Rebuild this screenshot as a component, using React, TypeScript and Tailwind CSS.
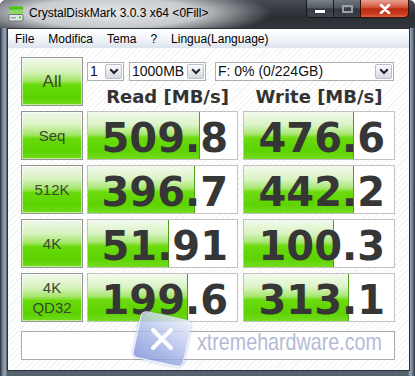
import React from 'react';

const rows = [
  { label: ['Seq'], read: '509.8', rw: 112, write: '476.6', ww: 110 },
  { label: ['512K'], read: '396.7', rw: 107, write: '442.2', ww: 110 },
  { label: ['4K'], read: '51.91', rw: 81, write: '100.3', ww: 90 },
  { label: ['4K', 'QD32'], read: '199.6', rw: 100, write: '313.1', ww: 105 },
];

const menu = ['File', 'Modifica', 'Tema', '?', 'Lingua(Language)'];

function Chevron() {
  return (
    <svg width="10" height="7" viewBox="0 0 10 7">
      <path d="M1.2 1.3 L5 5 L8.8 1.3" fill="none" stroke="#1c2433" strokeWidth="2" />
    </svg>
  );
}

function Select({ text, w }: { text: string; w: string }) {
  return (
    <div className={`${w} flex h-[19px] items-stretch border border-[#a9afb8] bg-white`}>
      <span className="flex-1 pl-[2px] text-[14px] leading-[17px] text-[#111]">{text}</span>
      <div className="m-[1px] flex w-[17px] items-center justify-center rounded-[2px] border border-[#b9bfc8] bg-[linear-gradient(180deg,#fbfbfb,#e6e8eb_55%,#d6d9de)]">
        <Chevron />
      </div>
    </div>
  );
}

function TestButton({ lines, big }: { lines: string[]; big?: boolean }) {
  return (
    <div
      className={`flex h-[49px] w-[62px] shrink-0 flex-col items-center justify-center border border-[#949494] bg-[linear-gradient(180deg,#f1f9ec_0%,#d8f2c0_28%,#a6e66c_48%,#68da0a_57%,#5bd200_84%,#72dc1e_100%)] shadow-[inset_0_0_0_1px_rgba(255,255,255,0.55)] font-['Liberation_Sans',sans-serif] text-[#3b4634] ${
        big ? 'text-[17px]' : 'text-[15px] leading-[20px]'
      }`}
    >
      {lines.map((l) => (
        <span key={l}>{l}</span>
      ))}
    </div>
  );
}

function Result({ value, fill, w }: { value: string; fill: number; w: string }) {
  return (
    <div
      className={`${w} flex h-[49px] items-center justify-end border border-[#c2c2c2] bg-white bg-[linear-gradient(#4f9f1c,#4f9f1c),linear-gradient(180deg,#f3faee_0%,#daf3c4_28%,#a9e672_47%,#6cdb0e_55%,#5dd300_82%,#74dc20_100%)] bg-no-repeat pr-[9px] pt-[4px] font-['DejaVu_Sans',sans-serif] text-[40px] font-bold leading-none text-[#363636]`}
      style={{ backgroundSize: `1px 100%, ${fill}px 100%`, backgroundPosition: `${fill - 1}px 0, 0 0` }}
    >
      {value}
    </div>
  );
}

export default function App() {
  return (
    <div className="relative h-[376px] w-[415px] overflow-hidden rounded-t-[6px] bg-[linear-gradient(90deg,#262b32_0px,#66768a_2px,#9caaba_5px,#56616e_7px,#56616e_408px,#9caaba_410px,#66768a_413px,#262b32_415px)]">
      {/* title bar */}
      <div className="flex h-[28px] items-start bg-[radial-gradient(ellipse_160px_26px_at_112px_13px,rgba(236,238,241,0.97)_0%,rgba(214,217,221,0.9)_55%,rgba(60,64,70,0)_100%),linear-gradient(180deg,#474c53,#2a2d32_60%,#33373d)]">
        <svg className="ml-[8px] mt-[6px]" width="16" height="16" viewBox="0 0 16 16">
          <rect x="1" y="0.5" width="14" height="3" fill="#46c800" />
          <rect x="1" y="4.5" width="14" height="3" fill="#7fe04a" />
          <rect x="1" y="8.5" width="14" height="6.5" rx="1" fill="#e4e7ea" stroke="#6f757c" />
          <rect x="3" y="11" width="5" height="1.5" fill="#9aa0a6" />
          <rect x="11" y="10.5" width="2" height="2" fill="#3ccc00" />
        </svg>
        <span className="ml-[5px] mt-[5px] font-['Liberation_Sans',sans-serif] text-[12px] leading-[16px] text-black">
          CrystalDiskMark 3.0.3 x64 &lt;0Fill&gt;
        </span>
        <div className="ml-auto mr-[6px] flex h-[18px]">
          <div className="flex w-[28px] items-end justify-center rounded-bl-[5px] border border-t-0 border-[#15181c] bg-[linear-gradient(180deg,#7a8088,#565c64_45%,#363a40_52%,#40454c)] pb-[4px]">
            <div className="h-[3px] w-[10px] bg-white shadow-[0_0_1px_#000]" />
          </div>
          <div className="flex w-[26px] items-center justify-center border-b border-[#15181c] bg-[linear-gradient(180deg,#6f757d,#50565e_45%,#33373d_52%,#3c4148)]">
            <div className="h-[8px] w-[11px] border-[2px] border-[#9aa0a7]" />
          </div>
          <div className="flex w-[49px] items-center justify-center rounded-br-[5px] border border-t-0 border-[#3a0e08] bg-[linear-gradient(180deg,#e8a093,#d5573f_42%,#bb2a12_52%,#c63a1c_80%,#e0603c)]">
            <svg width="12" height="10" viewBox="0 0 12 10">
              <path d="M2 1 L10 9 M10 1 L2 9" stroke="#fff" strokeWidth="2.6" strokeLinecap="round" />
            </svg>
          </div>
        </div>
      </div>

      {/* client */}
      <div className="ml-[7px] mr-[5px] h-[343px] border border-[#2a313b] bg-white">
        <div className="flex h-[19px] items-center gap-[14px] bg-[linear-gradient(180deg,#ffffff,#f1f4f8_55%,#dce3ed)] pl-[7px] font-['Liberation_Sans',sans-serif] text-[12px] text-black">
          {menu.map((m) => (
            <span key={m}>{m}</span>
          ))}
        </div>

        <div className="h-[322px] bg-[repeating-linear-gradient(135deg,#ffffff_0px,#ffffff_3px,#f3f3f3_3px,#f3f3f3_4px)] pl-[13px] pt-[9px]">
          <div className="flex gap-[4px]">
            <TestButton lines={['All']} big />
            <div className="flex flex-col">
              <div className="mt-[5px] flex font-['Liberation_Sans',sans-serif]">
                <Select text="1" w="w-[37px]" />
                <Select text="1000MB" w="ml-[5px] w-[77px]" />
                <Select text="F: 0% (0/224GB)" w="ml-[9px] w-[179px]" />
              </div>
              <div className="mt-[2px] flex h-[26px] gap-[5px] pt-[2px] font-['DejaVu_Sans',sans-serif] text-[18px] font-bold leading-none text-[#333]">
                <div className="flex w-[151px] items-center justify-center pl-[10px]">Read [MB/s]</div>
                <div className="flex w-[152px] items-center justify-center">Write [MB/s]</div>
              </div>
            </div>
          </div>

          <div className="mt-[2px] flex flex-col gap-[5px]">
            {rows.map((r) => (
              <div key={r.label.join()} className="flex">
                <TestButton lines={r.label} />
                <div className="ml-[4px] flex gap-[5px]">
                  <Result value={r.read} fill={r.rw} w="w-[151px]" />
                  <Result value={r.write} fill={r.ww} w="w-[152px]" />
                </div>
              </div>
            ))}
          </div>

          <div className="mt-[9px] h-[29px] w-[374px] border border-[#aaaaaa] bg-white" />
        </div>
      </div>

      {/* watermark */}
      <div className="absolute left-[136px] top-[315px] flex h-[48px] w-[52px] rotate-[12deg] items-center justify-center rounded-[6px] border border-white/70 bg-[linear-gradient(200deg,rgba(235,240,252,0.85),rgba(160,176,228,0.8)_60%,rgba(120,140,214,0.8))] shadow-[0_0_3px_rgba(90,110,180,0.5)]">
        <svg width="30" height="26" viewBox="0 0 30 26" className="-rotate-[12deg]">
          <path d="M6 4 L24 22 M24 4 L6 22" stroke="#fff" strokeWidth="4" strokeLinecap="round" />
        </svg>
      </div>
      <div className="absolute left-[197px] top-[330px] origin-left scale-x-[0.82] font-['Liberation_Sans',sans-serif] text-[24px] leading-none text-[#b3bbd6] [text-shadow:0_0_1px_#fff]">
        xtremehardware.com
      </div>
    </div>
  );
}
